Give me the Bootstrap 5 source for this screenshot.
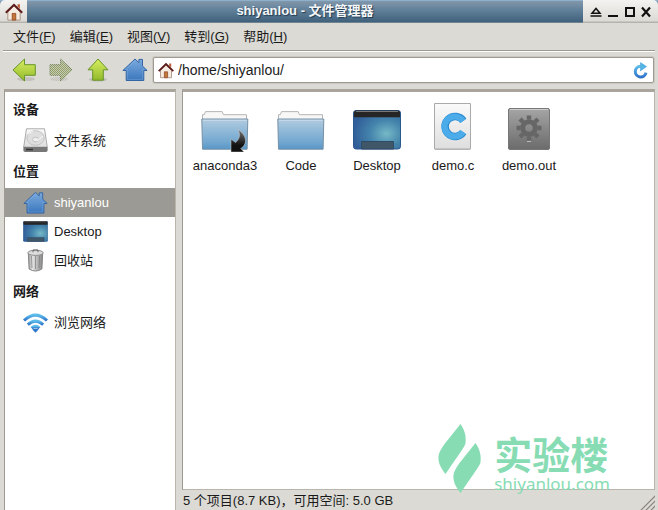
<!DOCTYPE html>
<html lang="zh-CN">
<head>
<meta charset="utf-8">
<meta name="viewport" content="width=device-width, initial-scale=1">
<title>shiyanlou - 文件管理器</title>
<link href="https://cdn.jsdelivr.net/npm/bootstrap@5.3.0/dist/css/bootstrap.min.css" rel="stylesheet">
<style>
:root{--panel:#dcdad5;--edge:#9e9a91;--soft:#bab5ab}
body{background:var(--panel);color:#1a1a1a;font:13px/20px "Liberation Sans","Noto Sans CJK SC",sans-serif}
button,input{font:inherit;color:inherit}
svg{display:block;flex:none}
.plain{border:0;background:none;padding:0}
.titlebar{height:23px;background:linear-gradient(#8fb0cc 0 1px,#8297aa 1px,#61809a 10px,#40617c 22px,#6f8390 22px);color:#f4f6f8;text-shadow:1px 1px 1px #1f3a52}
.title-end{background:linear-gradient(#f3f3f1,#dcdad5 21px,#b5b3ae 22px)}
.title-icon{width:27px;border-top-left-radius:5px}
.title-tools{width:75px;border-top-right-radius:5px;color:#111}
.title-text{line-height:22px;font-weight:700}
.menus{height:28px;padding:0 3px;margin:0 3px;border-bottom:1px solid var(--edge);box-shadow:0 1px #fff}
.menus button{padding:0 7px}
.tools{height:38px;padding:0 4px 0 5px}
.tools .tool{width:37px;height:30px}
.address{height:26px;border:1px solid var(--edge);box-shadow:0 0 0 1px #cbc8c1;border-radius:2px;background:#fff}
.address input{border:0;outline:0;background:none;font-size:14px;min-width:0}
.panes{gap:6px;padding:0 3px 0 4px}
.sunken{background:#fff;border:1px solid var(--soft);border-top:3px solid #a9a59c;border-left-color:var(--edge)}
.places{width:172px;border-bottom:0;padding-top:1px}
.places h2{font-size:13px;line-height:33px;margin:0;padding-left:8px;font-weight:700}
.places button{height:29px;padding:0 0 0 18px;gap:6px;width:100%;text-align:left}
.places button.picked{background:#9c9a94;color:#fff}
.files{padding:8px 4px}
.files button{width:76px;height:77px}
.status{height:20px;line-height:22px;padding-left:1px}
.brand{position:absolute;right:48px;bottom:16px;color:#87dcb4;gap:12px;pointer-events:none}
.brand-cn{font:700 38px/42px "Noto Sans CJK SC",sans-serif}
.brand-en{font:17px/20px "Noto Sans",sans-serif}
.grip{position:absolute;right:3px;bottom:0}
</style>
<script defer src="https://cdn.jsdelivr.net/npm/bootstrap@5.3.0/dist/js/bootstrap.bundle.min.js"></script>
</head>
<body>
<svg width="0" height="0" class="position-absolute" aria-hidden="true">
<defs>
<linearGradient id="green" x2="0" y2="1"><stop stop-color="#d8ee63"/><stop offset="1" stop-color="#92b929"/></linearGradient>
<linearGradient id="blue" x2="0" y2="1"><stop stop-color="#7baade"/><stop offset="1" stop-color="#3b77bd"/></linearGradient>
<linearGradient id="sky" x2="0" y2="1"><stop stop-color="#5dbdea"/><stop offset="1" stop-color="#2f74cb"/></linearGradient>
<linearGradient id="folderfill" x2="0" y2="1"><stop stop-color="#b1cbe0"/><stop offset=".75" stop-color="#73a8d0"/><stop offset="1" stop-color="#5897c8"/></linearGradient>
<linearGradient id="metal"><stop stop-color="#999"/><stop offset=".3" stop-color="#e5e5e5"/><stop offset=".6" stop-color="#bbb"/><stop offset="1" stop-color="#858585"/></linearGradient>
<linearGradient id="grey" x2="0" y2="1"><stop stop-color="#a5a5a5"/><stop offset="1" stop-color="#6b6b6b"/></linearGradient>
<linearGradient id="paper" x2="0" y2="1"><stop stop-color="#fafafa"/><stop offset="1" stop-color="#dedede"/></linearGradient>
<linearGradient id="dark" x2="0" y2="1"><stop stop-color="#777"/><stop offset=".7" stop-color="#111"/></linearGradient>
<radialGradient id="screen" cx=".7" cy=".6" r=".7"><stop stop-color="#75b9c6"/><stop offset=".5" stop-color="#4484ac"/><stop offset="1" stop-color="#315f99"/></radialGradient>
<pattern id="dots" width="2" height="2" patternUnits="userSpaceOnUse"><path fill="#dcdad5" fill-opacity=".7" d="M0 0h1v1H0zM1 1h1v1H1z"/></pattern>
<symbol id="cottage" viewBox="0 0 16 16"><path fill="#f6ebe1" stroke="#a18a7b" stroke-width=".8" d="M2.500 8 8 2.600 13.500 8v7.200h-11z"/><path fill="#bf5c34" d="M11.200 1h2v4l-2-2z"/><path fill="none" stroke="#5d1b1b" stroke-width="1.800" d="M.7 8.600 8 1.600l7.300 7"/><path fill="#c47639" stroke="#8d4520" stroke-width=".7" d="M6.400 9.300h3.200v5.900H6.400z"/></symbol>
<symbol id="house" viewBox="0 0 26 24"><path fill="url(#blue)" stroke="#3465a4" stroke-linejoin="round" d="M13 1 .9 12.500h3.300v10h17.600v-10h3.300L20.500 8V1.400h-3.600v3.200z"/><path fill="none" stroke="#a1c4e8" stroke-opacity=".3" d="M13 2.600 3.500 11.500h1.800v9.900h15.400v-9.900h1.900"/></symbol>
<symbol id="desk" viewBox="0 0 48 40" preserveAspectRatio="none"><rect x=".5" y=".5" width="47" height="38.500" rx="2.500" fill="url(#screen)" stroke="#2b588d"/><path fill="#252525" d="M1 7.300V3q0-2.500 2.500-2.500h41Q47 .5 47 3v4.300z"/><path stroke="#777" d="M3 1.500h42"/><path fill="#405768" stroke="#304b66" d="M8.500 31.500h32V39h-32z"/></symbol>
<symbol id="folder" viewBox="0 0 48 39"><path fill="#f7f7f7" stroke="#b5b5b5" d="M1.500 12V3.700h1.800L4.500.6h16.700l1.200 3.100h23.100V12z"/><path fill="url(#folderfill)" stroke="#7890a4" d="M.8 8h46l-.7 30.200H1.500z"/><path stroke="#d1e2ef" stroke-opacity=".8" d="M2 9.300h43.800"/></symbol>
</defs>
</svg>
<div class="d-flex flex-column vh-100 position-relative">
<header class="titlebar d-flex align-items-stretch">
  <div class="title-end title-icon d-flex align-items-center justify-content-center"><svg width="18" height="18"><use href="#cottage"/></svg></div>
  <div class="title-text flex-fill text-center text-truncate">shiyanlou - 文件管理器</div>
  <div class="title-end title-tools d-flex align-items-center justify-content-evenly">
    <button class="plain" aria-label="卷起"><svg width="12" height="12" viewBox="0 0 12 12"><path fill="none" stroke="currentColor" stroke-width="1.500" d="M2 7.200h8L6 2.500zM.5 10h11"/></svg></button>
    <button class="plain" aria-label="最小化"><svg width="10" height="12" viewBox="0 0 10 12"><path fill="currentColor" d="M0 9h10v2H0z"/></svg></button>
    <button class="plain" aria-label="最大化"><svg width="10" height="12" viewBox="0 0 10 12"><path fill="none" stroke="currentColor" stroke-width="2" d="M1 2h8v8H1z"/></svg></button>
    <button class="plain" aria-label="关闭"><svg width="10" height="12" viewBox="0 0 10 12"><path fill="none" stroke="currentColor" stroke-width="2.200" d="m1 1.500 8 9M9 1.500l-8 9"/></svg></button>
  </div>
</header>
<nav class="menus d-flex align-items-center" aria-label="菜单">
  <button class="plain">文件(<u>F</u>)</button><button class="plain">编辑(<u>E</u>)</button><button class="plain">视图(<u>V</u>)</button><button class="plain">转到(<u>G</u>)</button><button class="plain">帮助(<u>H</u>)</button>
</nav>
<div class="tools d-flex align-items-center" role="toolbar" aria-label="导航">
  <button class="plain tool d-flex align-items-center justify-content-center" aria-label="后退"><svg width="24" height="24" viewBox="0 0 24 24"><ellipse cx="14" cy="21" rx="9" ry="2" fill="#777" opacity=".25"/><path fill="url(#green)" stroke="#679528" stroke-linejoin="round" d="M1 12 12.500 1v5.700h10.800v10.600H12.500V23z"/></svg></button>
  <button class="plain tool d-flex align-items-center justify-content-center" aria-label="前进" disabled><svg width="24" height="24" viewBox="0 0 24 24"><ellipse cx="10" cy="21" rx="9" ry="2" fill="#777" opacity=".25"/><path fill="#93a168" stroke="#70845a" stroke-linejoin="round" d="M23 12 11.500 1v5.700H1v10.600h10.500V23z"/><path fill="url(#dots)" d="M0 0h24v24H0z"/></svg></button>
  <button class="plain tool d-flex align-items-center justify-content-center" aria-label="上一级"><svg width="24" height="24" viewBox="0 0 24 24"><ellipse cx="12" cy="21.500" rx="9" ry="2" fill="#777" opacity=".3"/><path fill="url(#green)" stroke="#679528" stroke-linejoin="round" d="M12 1 22 11.800h-4.700v10.400H6.700V11.800H2z"/></svg></button>
  <button class="plain tool d-flex align-items-center justify-content-center" aria-label="主目录"><svg width="26" height="24"><use href="#house"/></svg></button>
  <div class="address flex-fill d-flex align-items-center px-1">
    <svg width="16" height="17" aria-hidden="true"><use href="#cottage"/></svg>
    <input class="flex-fill px-1 py-0" type="text" aria-label="位置" value="/home/shiyanlou/">
    <button class="plain" aria-label="重新载入"><svg width="16" height="17" viewBox="0 0 16 17"><path fill="none" stroke="url(#sky)" stroke-width="3" d="M7.500 4.200A5.400 5.400 0 1 0 13 10.600"/><path fill="#51b5e5" stroke="#3f95d2" stroke-width=".5" d="m7.500.6 6 4-6 4.300z"/></svg></button>
  </div>
</div>
<div class="panes d-flex flex-fill">
  <aside class="sunken places flex-shrink-0">
    <h2>设备</h2>
    <button class="plain d-flex align-items-center"><svg width="25" height="25" viewBox="0 0 25 25"><path fill="url(#paper)" stroke="#aaa" stroke-linejoin="round" d="M3.500.8h18l2.800 18.300H.7z"/><path fill="#777" d="M.4 19h24.200v3.300q0 1.700-1.700 1.700H2.100Q.4 24 .4 22.300z"/><path stroke="#333" stroke-width="1.500" d="M3 21.500h7"/><ellipse cx="12.500" cy="10" rx="8.700" ry="7.300" fill="#dedede" stroke="#c2c2c2"/><ellipse cx="12.500" cy="11.500" rx="3" ry="2.300" fill="#eee" stroke="#c2c2c2"/><path stroke="#f9f9f9" d="m14 13 6-5M5 6l5-3"/></svg><span>文件系统</span></button>
    <h2>位置</h2>
    <button class="plain picked d-flex align-items-center" aria-current="true"><svg width="25" height="24"><use href="#house"/></svg><span>shiyanlou</span></button>
    <button class="plain d-flex align-items-center"><svg width="25" height="21"><use href="#desk"/></svg><span>Desktop</span></button>
    <button class="plain d-flex align-items-center"><svg width="25" height="23" viewBox="0 0 25 23"><path fill="url(#metal)" stroke="#858585" d="m5.300 4 .8 16q6.400 4 12.800 0l.8-16z"/><path stroke="#7b7b7b" stroke-opacity=".7" d="m8.500 7 .5 12M12.500 7v13M16.500 7 16 19"/><ellipse cx="12.500" cy="3.800" rx="7.700" ry="2.600" fill="#ddd" stroke="#8d8d8d"/><path fill="none" stroke="#666" d="M10 3.300V1h5v2.300"/></svg><span>回收站</span></button>
    <h2>网络</h2>
    <button class="plain d-flex align-items-center"><svg width="25" height="20" viewBox="0 0 25 20"><g fill="none" stroke="url(#sky)" stroke-width="3"><path d="M1 7.500q11.500-10.700 23 0"/><path d="M4.800 11.700q7.700-7.200 15.400 0"/><path d="M8.600 15.200q3.900-3.600 7.800 0"/></g><path fill="#3179c9" d="m9.300 16.600 3.200 3.200 3.200-3.200q-3.200-2.400-6.400 0z"/></svg><span>浏览网络</span></button>
  </aside>
  <div class="flex-fill d-flex flex-column">
    <main class="sunken files flex-fill d-flex flex-wrap align-content-start">
      <button class="plain"><svg class="mx-auto" width="48" height="50" viewBox="0 0 48 50"><use href="#folder" y="9" width="48" height="39"/><path fill="url(#dark)" stroke="#ccc" stroke-width=".5" d="M30 37v13h13l-3.300-3.500C46 43 47 34 37 27.500c2.500 5 2 9-2.500 13z"/></svg><span class="d-block mt-1">anaconda3</span></button>
      <button class="plain"><svg class="mx-auto" width="48" height="50"><use href="#folder" y="9" width="48" height="39"/></svg><span class="d-block mt-1">Code</span></button>
      <button class="plain"><svg class="mx-auto" width="48" height="50"><use href="#desk" y="8" width="48" height="40"/></svg><span class="d-block mt-1">Desktop</span></button>
      <button class="plain"><svg class="mx-auto" width="48" height="50" viewBox="0 -1 48 50"><path fill="url(#paper)" stroke="#aaa" d="M5.500.5h36v45.500h-36z"/><path stroke="#888" stroke-opacity=".4" d="M6 46.500h35"/><path fill="none" stroke="#298bd0" stroke-width="7.500" d="M34.300 17.800a10 10 0 1 0 0 11.400"/><path fill="none" stroke="#4cacea" stroke-width="6" d="M34 18.100a10 10 0 1 0 0 10.800"/></svg><span class="d-block mt-1">demo.c</span></button>
      <button class="plain"><svg class="mx-auto" width="48" height="50" viewBox="0 -1 48 50"><rect x="3.500" y="5.500" width="41" height="41" rx="1.500" fill="url(#grey)" stroke="#777"/><path stroke="#ccc" d="M5 6.500h38"/><g fill="none" stroke="#666"><circle cx="24" cy="25" r="6.300" stroke-width="5"/><path stroke-width="4.400" d="M24 16.500v-4M24 33.500v4M15.500 25h-4M32.500 25h4M18 19l-3-3M30 19l3-3M18 31l-3 3M30 31l3 3"/></g><path stroke="#bbb" d="M22 38.500h4"/></svg><span class="d-block mt-1">demo.out</span></button>
    </main>
    <footer class="status">5 个项目(8.7 KB)，可用空间: 5.0 GB</footer>
  </div>
</div>
<svg class="grip" width="16" height="16" viewBox="0 0 16 16" aria-hidden="true"><path stroke="#fff" d="M0 17 17 0M5 17 17 5M10 17l7-7"/><path stroke="#88857d" stroke-width="1.400" d="M1 17 17 1M6 17 17 6M11 17l6-6"/></svg>
<div class="brand d-flex align-items-end">
  <svg width="44" height="70" viewBox="0 0 44 70" fill="currentColor" aria-hidden="true"><path id="leaf" d="M22.500 0C26.500 6 28.500 12 27.500 19 27 22 25.500 24 7.500 50 2 43 0 38 .5 32 1 28 3 25 6.500 20z"/><use href="#leaf" x="15" y="19"/></svg>
  <div><div class="brand-cn">实验楼</div><div class="brand-en">shiyanlou.com</div></div>
</div>
</div>
</body>
</html>
